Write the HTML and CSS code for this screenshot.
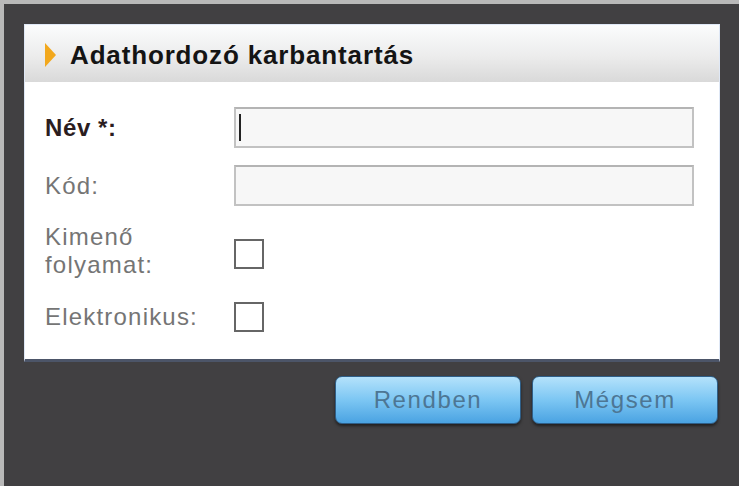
FILE: index.html
```html
<!DOCTYPE html>
<html lang="hu">
<head>
    <meta charset="UTF-8">
    <meta name="viewport" content="width=device-width, initial-scale=1.0">
    <title>Adathordozó karbantartás</title>
    <link rel="stylesheet" href="styles.css">
</head>
<body>

    <div class="screen">
        <div class="dialog">
            <div class="dialog-header">
                <span class="arrow"></span>
                <h2>Adathordozó karbantartás</h2>
            </div>

            <div class="form">
                <label class="label required">Név *:</label>
                <div class="field"><span class="caret"></span></div>

                <label class="label">Kód:</label>
                <div class="field"></div>

                <label class="label">Kimenő<br>folyamat:</label>
                <div class="check-cell"><span class="check"></span></div>

                <label class="label">Elektronikus:</label>
                <div class="check-cell"><span class="check"></span></div>
            </div>
        </div>

        <div class="buttons">
            <button class="btn">Rendben</button>
            <button class="btn">Mégsem</button>
        </div>
    </div>

</body>
</html>
```

FILE: styles.css
```css
body {
    margin: 0;
    padding: 4px 0 0 4px;
    background: #b9b9b9;
    font-family: "Liberation Sans", Arial, sans-serif;
    height: 486px;
    box-sizing: border-box;
    overflow: hidden;
}
.screen {
    background: #414042;
    height: 100%;
    padding: 20px 19px 0 20px;
    box-sizing: border-box;
}
.dialog {
    background: #fff;
    border: 1px solid #dfe8f6;
    border-bottom: 3px solid #4c5568;
}
.dialog-header {
    height: 57px;
    display: flex;
    align-items: center;
    padding-left: 20px;
    background: linear-gradient(#fbfcfd, #ececec 55%, #d9d9d9);
}
.arrow {
    width: 0;
    height: 0;
    border-top: 12px solid transparent;
    border-bottom: 12px solid transparent;
    border-left: 11px solid #f2a81d;
    margin-right: 14px;
    margin-top: 2px;
}
h2 {
    margin: 0;
    font-size: 26px;
    letter-spacing: 0.85px;
    font-weight: bold;
    color: #141414;
    margin-top: 3px;
}
.form {
    display: grid;
    grid-template-columns: 189px 460px;
    grid-template-rows: 41px 41px 56px 42px;
    row-gap: 17px;
    padding: 25px 0 21px 20px;
}
.label {
    display: flex;
    align-items: center;
    font-size: 24px;
    line-height: 28px;
    letter-spacing: 1.2px;
    color: #757575;
}
.required {
    font-weight: bold;
    color: #2b1d1f;
    letter-spacing: 0.6px;
}
.field {
    border: 2px solid #c2c2c2;
    border-top-color: #b4b4b4;
    background: #f7f7f7;
    display: flex;
    align-items: center;
    padding-left: 3px;
}
.caret {
    width: 2px;
    height: 27px;
    background: #222;
}
.check-cell {
    display: flex;
    align-items: center;
}
.check {
    width: 26px;
    height: 26px;
    border: 2px solid #666;
    background: #fff;
    margin-top: 6px;
}
.check-cell:last-child .check {
    margin-top: 0;
}
.buttons {
    display: flex;
    justify-content: flex-end;
    gap: 11px;
    margin-top: 14px;
    padding-right: 2px;
}
.btn {
    width: 186px;
    height: 48px;
    border: 1px solid #2f5f88;
    border-radius: 7px;
    background: linear-gradient(#b4e2fb, #7cc6f3 50%, #4aa3e2);
    color: #4d7694;
    font-family: "Liberation Sans", Arial, sans-serif;
    font-size: 24px;
    letter-spacing: 1.6px;
    box-shadow: 0 2px 3px rgba(0, 0, 0, 0.5);
    cursor: pointer;
}
```
